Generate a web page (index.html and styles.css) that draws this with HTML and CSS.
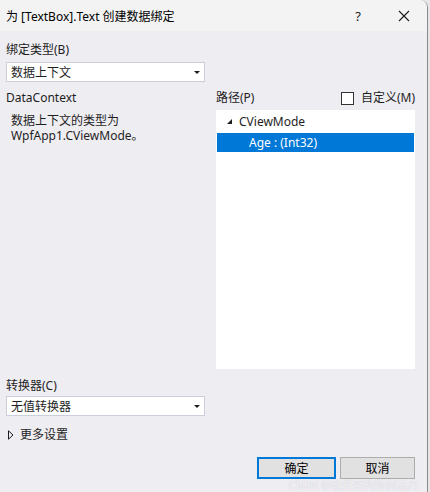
FILE: index.html
```html
<!DOCTYPE html>
<html lang="zh-CN">
<head>
<meta charset="utf-8">
<title>为 [TextBox].Text 创建数据绑定</title>
<link rel="stylesheet" href="styles.css">
</head>
<body>
<div class="window">
  <div class="titlebar">
    <span class="title">为 [TextBox].Text 创建数据绑定</span>
    <span class="tb-btn help">?</span>
    <span class="tb-btn close">
      <svg width="12" height="12" viewBox="0 0 12 12"><path d="M1 1 L11 11 M11 1 L1 11" stroke="#1a1a1a" stroke-width="1.1" fill="none"/></svg>
    </span>
  </div>
  <div class="content">
    <div class="lbl">绑定类型(B)</div>
    <div class="combo"><span>数据上下文</span><span class="arrow"></span></div>
    <div class="cols">
      <div class="col">
        <div class="lbl">DataContext</div>
        <div class="desc">数据上下文的类型为<br>WpfApp1.CViewMode。</div>
      </div>
      <div class="col">
        <div class="path-head">
          <span class="lbl">路径(P)</span>
          <span class="custom"><span class="check"></span>自定义(M)</span>
        </div>
        <div class="list">
          <div class="row root"><span class="tri-down"></span>CViewMode</div>
          <div class="row sel">Age : (Int32)</div>
        </div>
      </div>
    </div>
    <div class="lbl conv-lbl">转换器(C)</div>
    <div class="combo conv"><span>无值转换器</span><span class="arrow"></span></div>
    <div class="more">
      <svg class="tri-right" width="6" height="10" viewBox="0 0 6 10"><polygon points="0.5,0.8 5,5 0.5,9.2" fill="none" stroke="#1e1e1e" stroke-width="1"/></svg>
      更多设置
    </div>
    <div class="buttons">
      <div class="btn ok">确定</div>
      <div class="btn cancel">取消</div>
    </div>
  </div>
  <div class="watermark">CSDN @软件架构师何志丹</div>
</div>
</body>
</html>
```
FILE: styles.css
```css
html, body {
  margin: 0;
  padding: 0;
}
body {
  background: #e6e6e6;
  width: 430px;
  height: 492px;
  overflow: hidden;
  font-family: "Noto Sans", "Noto Sans CJK SC", sans-serif;
  font-size: 12px;
  color: #1e1e1e;
}
.window {
  position: relative;
  width: 427px;
  height: 492px;
  background: #eeedf2;
  border-right: 1px solid #8a8a8a;
  border-top-right-radius: 8px;
  overflow: hidden;
}
.titlebar {
  height: 31px;
  background: #f3f3f3;
  display: flex;
  align-items: center;
  padding-left: 6px;
}
.title {
  flex: 1;
  color: #000;
  font-size: 12px;
}
.tb-btn {
  width: 46px;
  height: 31px;
  display: flex;
  align-items: center;
  justify-content: center;
  color: #1a1a1a;
}
.help {
  font-size: 13px;
}
.close {
  width: 45px;
  margin-right: 1px;
}
.content {
  padding: 11px 12px 0 6px;
  display: flex;
  flex-direction: column;
}
.lbl {
  line-height: 16px;
  height: 16px;
  white-space: nowrap;
}
.combo {
  margin-top: 4px;
  width: 199px;
  height: 20px;
  box-sizing: border-box;
  border: 1px solid #cccedb;
  background: #fff;
  display: flex;
  align-items: center;
  justify-content: space-between;
  padding: 0 4px 0 4px;
  color: #1e1e1e;
}
.arrow {
  width: 0;
  height: 0;
  border-left: 3px solid transparent;
  border-right: 3px solid transparent;
  border-top: 3px solid #1e1e1e;
}
.cols {
  margin-top: 8px;
  display: grid;
  grid-template-columns: 199px 199px;
  column-gap: 11px;
}
.desc {
  margin-top: 7px;
  padding-left: 5px;
  line-height: 15px;
}
.path-head {
  display: flex;
  justify-content: space-between;
  align-items: center;
  height: 16px;
}
.custom {
  display: flex;
  align-items: center;
  gap: 7px;
  line-height: 16px;
}
.check {
  width: 11px;
  height: 11px;
  border: 1px solid #333;
  background: #fff;
}
.list {
  margin-top: 4px;
  height: 259px;
  background: #fff;
  padding: 0 1px;
  box-sizing: border-box;
}
.row {
  display: flex;
  align-items: center;
  white-space: nowrap;
}
.root {
  height: 22px;
  padding-left: 10px;
}
.tri-down {
  width: 0;
  height: 0;
  border-left: 5px solid transparent;
  border-bottom: 5px solid #1e1e1e;
  margin-right: 7px;
  margin-top: 1px;
}
.sel {
  margin-top: 1px;
  height: 19px;
  background: #0078d7;
  color: #fff;
  padding-left: 32px;
}
.conv-lbl {
  margin-top: 9px;
}
.conv {
  margin-top: 2px;
}
.more {
  margin-top: 11px;
  height: 16px;
  line-height: 16px;
  display: flex;
  align-items: center;
  gap: 6px;
  padding-left: 2px;
}
.tri-right {
  display: block;
}
.buttons {
  margin-top: 14px;
  display: flex;
  justify-content: flex-end;
  gap: 4px;
}
.btn {
  height: 22px;
  box-sizing: border-box;
  display: flex;
  align-items: center;
  justify-content: center;
  background: #e1e1e1;
  border: 1px solid #adadad;
  color: #000;
}
.ok {
  width: 79px;
  border: 2px solid #0078d7;
}
.cancel {
  width: 75px;
}
.watermark {
  position: absolute;
  right: 8px;
  bottom: 1px;
  font-size: 11px;
  line-height: 12px;
  color: rgba(255, 255, 255, 0.75);
  text-shadow: 0 0 1px rgba(160, 160, 170, 0.6);
  white-space: nowrap;
}
```
